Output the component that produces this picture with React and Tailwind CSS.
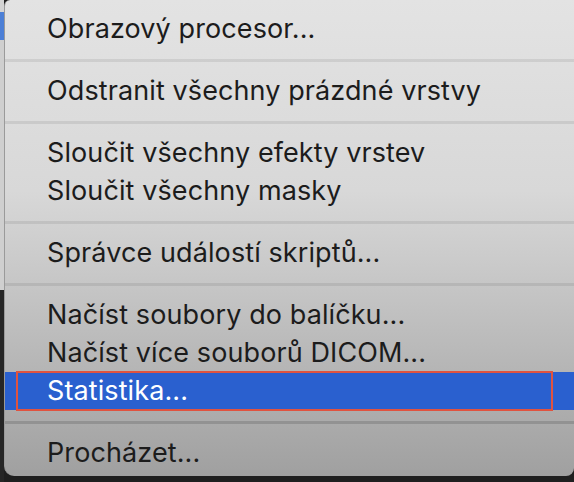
const SECTIONS = [
  ['Obrazový procesor...'],
  ['Odstranit všechny prázdné vrstvy'],
  ['Sloučit všechny efekty vrstev', 'Sloučit všechny masky'],
  ['Správce událostí skriptů...'],
  ['Načíst soubory do balíčku...', 'Načíst více souborů DICOM...', 'Statistika...'],
  ['Procházet...'],
]

function Item({ label }) {
  const active = label === 'Statistika...'
  if (active) {
    return (
      <div className="relative h-[38px] flex items-center pl-[42px] bg-[#2a60cf] text-white">
        <div className="absolute left-[11px] top-[-1px] w-[537px] h-[40px] border-2 border-[#e0533f]" />
        <span>{label}</span>
      </div>
    )
  }
  return <div className="h-[38px] flex items-center pl-[42px]">{label}</div>
}

export default function App() {
  return (
    <div className="w-[574px] h-[482px] bg-[#1f1f1f] flex overflow-hidden" style={{ fontFamily: 'Inter, "Noto Sans", sans-serif' }}>
      <div className="w-[4px] flex flex-col">
        <div className="h-[12px] bg-[#d4d4d4]" />
        <div className="h-[28px] bg-[#4c7fd6]" />
        <div className="h-[250px] bg-[#cfcfcf]" />
        <div className="flex-1 bg-[#262626]" />
      </div>
      <div className="flex-1 h-[476px] rounded-tl-[6px] rounded-bl-[10px] rounded-br-[8px] border-l border-[#9a9a9a] bg-[linear-gradient(to_bottom,#e3e3e3_0%,#d8d8d8_40%,#c4c4c4_62%,#a0a0a0_100%)] pt-[10px] text-[27px] text-[#1c1c1c] tracking-[0.1px]">
        {SECTIONS.map((items, i) => (
          <div key={i}>
            {i > 0 && (
              <div className="h-[24px] flex items-center">
                <div className={`w-full h-[3px] ${i === 5 ? 'bg-black/[0.14]' : 'bg-black/[0.08]'}`} />
              </div>
            )}
            {items.map(label => <Item key={label} label={label} />)}
          </div>
        ))}
      </div>
    </div>
  )
}
